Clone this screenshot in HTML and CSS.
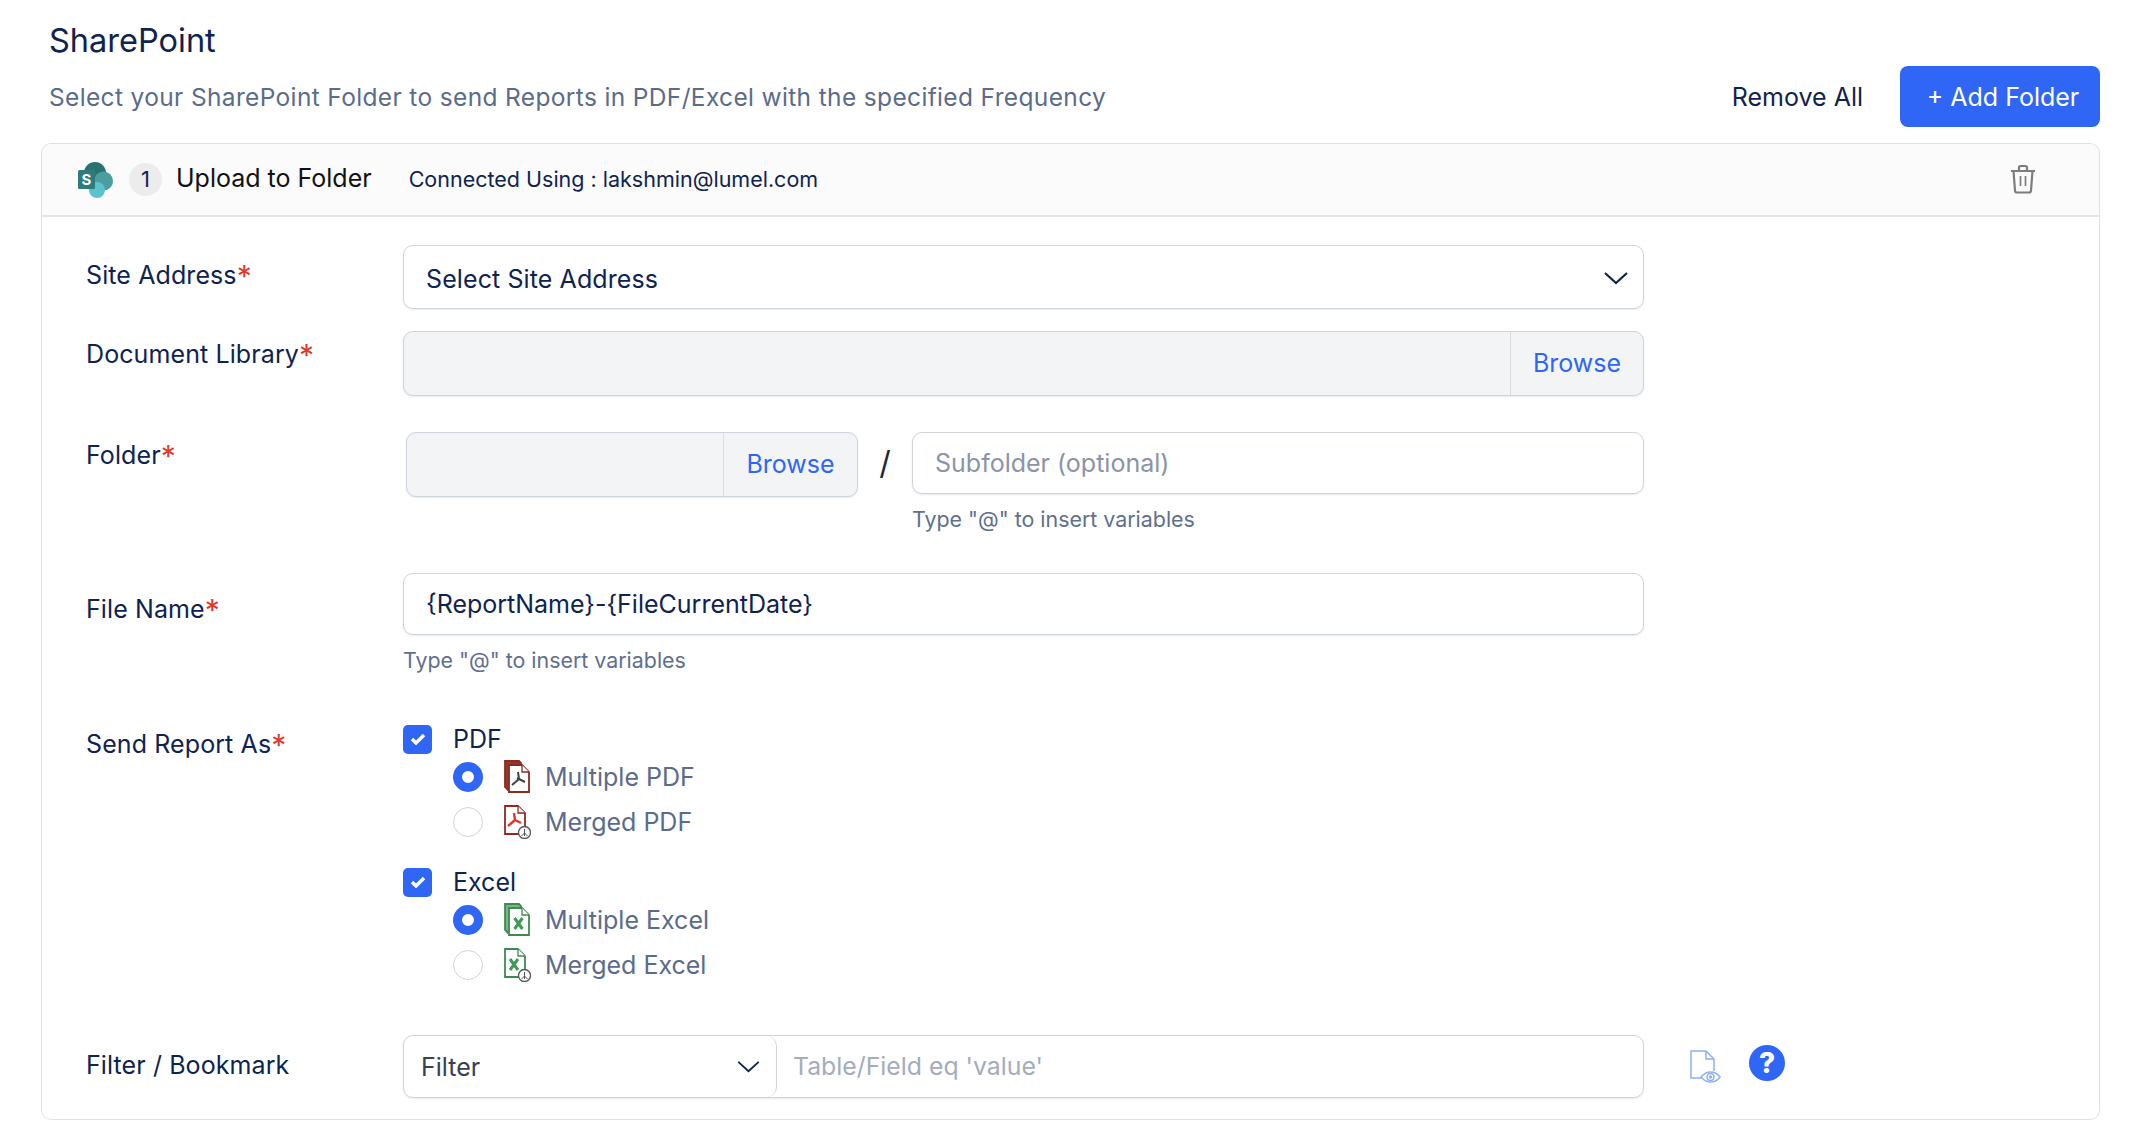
FILE: index.html
```html
<!DOCTYPE html>
<html lang="en">
<head>
  <meta charset="UTF-8">
  <title>SharePoint</title>
  <link rel="stylesheet" href="styles.css">
</head>
<body>

  <h1 class="page-title">SharePoint</h1>

  <div class="top-row">
    <p class="page-desc">Select your SharePoint Folder to send Reports in PDF/Excel with the specified Frequency</p>
    <div class="top-actions">
      <button class="btn-link">Remove All</button>
      <button class="btn-primary">+ Add Folder</button>
    </div>
  </div>

  <div class="card">
    <div class="card-head">
      <svg class="sp-logo" viewBox="0 0 36 36" width="36" height="36">
        <circle cx="17" cy="11" r="11" fill="#2a7270"/>
        <circle cx="25.500" cy="19" r="9.500" fill="#4a9ea0"/>
        <circle cx="19" cy="28" r="8" fill="#5cc3ce"/>
        <rect x="0" y="8" width="17" height="19" rx="1.500" fill="#2f7a7c"/>
        <text x="8.500" y="23" class="sp-letter" text-anchor="middle">S</text>
      </svg>
      <span class="badge">1</span>
      <span class="card-title">Upload to Folder</span>
      <span class="card-conn">Connected Using : lakshmin@lumel.com</span>
      <svg class="trash" viewBox="0 0 28 30" width="28" height="30" fill="none" stroke="#7d7d7d" stroke-width="2.200">
        <path d="M2 7h24M10 7V3.500a1.500 1.500 0 0 1 1.500-1.500h5a1.500 1.500 0 0 1 1.500 1.500V7"/>
        <path d="M4.500 7l1.500 19.500a2 2 0 0 0 2 2h12a2 2 0 0 0 2-2L23.500 7"/>
        <path d="M11.500 12v10M16.500 12v10" stroke-width="1.700"/>
      </svg>
    </div>

    <div class="card-body">
      <div class="row">
        <div class="label label-site">Site Address<span class="req">*</span></div>
        <div class="field select-box">
          <span class="select-text">Select Site Address</span>
          <svg class="chev" viewBox="0 0 24 14" width="24" height="14" fill="none" stroke="#0f2350" stroke-width="2.200"><path d="M1 2l11 10L23 2"/></svg>
        </div>
      </div>

      <div class="row row-lib">
        <div class="label label-lib">Document Library<span class="req">*</span></div>
        <div class="field browse-box">
          <div class="browse-empty"></div>
          <div class="browse-btn">Browse</div>
        </div>
      </div>

      <div class="row row-folder">
        <div class="label label-lib">Folder<span class="req">*</span></div>
        <div class="folder-wrap">
          <div class="browse-box folder-box">
            <div class="browse-empty"></div>
            <div class="browse-btn">Browse</div>
          </div>
          <div class="slash">/</div>
          <div class="sub-wrap">
            <div class="text-input placeholder">Subfolder (optional)</div>
            <div class="hint">Type "@" to insert variables</div>
          </div>
        </div>
      </div>

      <div class="row row-file">
        <div class="label label-file">File Name<span class="req">*</span></div>
        <div class="field-plain">
          <div class="text-input">{ReportName}-{FileCurrentDate}</div>
          <div class="hint">Type "@" to insert variables</div>
        </div>
      </div>

      <div class="row row-send">
        <div class="label label-send">Send Report As<span class="req">*</span></div>
        <div class="send-list">
          <div class="check-line">
            <span class="check">
              <svg viewBox="0 0 16 12" width="16" height="12" fill="none" stroke="#fff" stroke-width="3.400"><path d="M2 6l4 4 8-8"/></svg>
            </span>
            PDF
          </div>
          <div class="radio-line">
            <span class="radio on"></span>
            <svg class="file-icon" viewBox="0 0 27 34" width="27" height="34">
              <path d="M1 1h14l2 2v26l-13 1-3-3z" fill="#8e3a30" stroke="#8e2a20" stroke-width="1.800"/>
              <path d="M5 5h13l7 7v20H5z" fill="#fff" stroke="#8e2a20" stroke-width="1.800"/>
              <path d="M18 5v7h7" fill="#fff" stroke="#8e2a20" stroke-width="1.300"/>
              <path d="M14 12l1 7-7 6M15 19l6 3M15 19l-2-1" fill="none" stroke="#444" stroke-width="2"/>
            </svg>
            <span class="opt-text">Multiple PDF</span>
          </div>
          <div class="radio-line">
            <span class="radio"></span>
            <svg class="file-icon" viewBox="0 0 27 34" width="27" height="34">
              <path d="M1 1h13l7 7v21H1z" fill="#fff" stroke="#8e2a20" stroke-width="1.800"/>
              <path d="M14 1v7h7" fill="#fff" stroke="#8e2a20" stroke-width="1.300"/>
              <path d="M10 8l1 7-7 6M11 15l6 3" fill="none" stroke="#e0352b" stroke-width="2.400"/>
              <circle cx="20.500" cy="27.500" r="6" fill="#fff" stroke="#555" stroke-width="1.300"/>
              <path d="M20.500 24v7M17.500 31l3-3 3 3" fill="none" stroke="#555" stroke-width="1"/>
            </svg>
            <span class="opt-text">Merged PDF</span>
          </div>

          <div class="check-line check-excel">
            <span class="check">
              <svg viewBox="0 0 16 12" width="16" height="12" fill="none" stroke="#fff" stroke-width="3.400"><path d="M2 6l4 4 8-8"/></svg>
            </span>
            Excel
          </div>
          <div class="radio-line">
            <span class="radio on"></span>
            <svg class="file-icon" viewBox="0 0 27 34" width="27" height="34">
              <path d="M1 1h14l2 2v26l-13 1-3-3z" fill="#7bb487" stroke="#3f8a50" stroke-width="1.800"/>
              <path d="M5 5h13l7 7v20H5z" fill="#fff" stroke="#3f8a50" stroke-width="1.800"/>
              <path d="M18 5v7h7" fill="#fff" stroke="#3f8a50" stroke-width="1.300"/>
              <path d="M10.500 15l8 11M18.500 15l-8 11" fill="none" stroke="#3f9a55" stroke-width="3"/>
            </svg>
            <span class="opt-text">Multiple Excel</span>
          </div>
          <div class="radio-line">
            <span class="radio"></span>
            <svg class="file-icon" viewBox="0 0 27 34" width="27" height="34">
              <path d="M1 1h13l7 7v21H1z" fill="#fff" stroke="#3f8a50" stroke-width="1.800"/>
              <path d="M14 1v7h7" fill="#fff" stroke="#3f8a50" stroke-width="1.300"/>
              <path d="M6 11l8 11M14 11L6 22" fill="none" stroke="#3f9a55" stroke-width="3"/>
              <circle cx="20.500" cy="27.500" r="6" fill="#fff" stroke="#555" stroke-width="1.300"/>
              <path d="M20.500 24v7M17.500 31l3-3 3 3" fill="none" stroke="#555" stroke-width="1"/>
            </svg>
            <span class="opt-text">Merged Excel</span>
          </div>
        </div>
      </div>

      <div class="row row-filter">
        <div class="label label-filter">Filter / Bookmark</div>
        <div class="field filter-box">
          <div class="filter-select">
            <span>Filter</span>
            <svg viewBox="0 0 24 14" width="23" height="13" fill="none" stroke="#0f2350" stroke-width="2"><path d="M1 2l11 10L23 2"/></svg>
          </div>
          <div class="filter-input">Table/Field eq 'value'</div>
        </div>
        <svg class="doc-eye" viewBox="0 0 31 34" width="31" height="34" fill="none" stroke="#8fb0f5" stroke-width="1.500">
          <path d="M15 28H1V1h15l8 8v12M16 1v8h8"/>
          <path d="M11 27c3-3.500 6-5 9.500-5s7 1.500 9.500 5c-2.500 3.500-6 5-9.500 5s-6.500-1.500-9.500-5z" fill="#fff"/>
          <circle cx="20.500" cy="27" r="3.500"/>
          <circle cx="20.500" cy="27" r="1" fill="#8fb0f5"/>
        </svg>
        <span class="help">?</span>
      </div>
    </div>
  </div>

</body>
</html>
```

FILE: styles.css
```css
* {
  box-sizing: border-box;
}

body {
  margin: 0;
  padding: 0 36px 0 41px;
  background-color: #fff;
  font-family: Inter, "Noto Sans", sans-serif;
  color: #0f2350;
}

.page-title {
  margin: 0 0 0 8px;
  padding-top: 21px;
  height: 66px;
  font-size: 32.500px;
  line-height: 40px;
  font-weight: 400;
}

.top-row {
  display: flex;
  align-items: center;
  justify-content: space-between;
  height: 77px;
  padding-bottom: 16px;
}

.page-desc {
  margin: 0 0 0 8px;
  font-size: 24.500px;
  line-height: 30px;
  letter-spacing: 0.35px;
  color: #5b6b8c;
}

.top-actions {
  display: flex;
  align-items: center;
  gap: 37px;
}

.btn-link {
  border: none;
  background: none;
  padding: 0;
  font-family: inherit;
  font-size: 25px;
  color: #0f2350;
}

.btn-primary {
  width: 200px;
  height: 61px;
  border: none;
  border-radius: 8px;
  background-color: #2f66f6;
  color: #fff;
  font-family: inherit;
  font-size: 25px;
  padding: 0 0 0 6px;
}

.card {
  border: 1px solid #dde0e7;
  border-radius: 10px;
  height: 977px;
}

.card-head {
  display: flex;
  align-items: center;
  height: 73px;
  padding: 0 62px 0 36px;
  background-color: #fbfbfb;
  border-bottom: 2px solid #e2e4ea;
  border-radius: 10px 10px 0 0;
}

.sp-logo {
  flex: none;
}

.sp-letter {
  font-size: 15px;
  font-weight: 700;
  fill: #fff;
}

.badge {
  width: 33px;
  height: 33px;
  margin-left: 15px;
  border-radius: 50%;
  background-color: #ececec;
  font-size: 22px;
  line-height: 33px;
  text-align: center;
}

.card-title {
  margin-left: 14px;
  padding-bottom: 3px;
  font-size: 25px;
  color: #111;
}

.card-conn {
  margin-left: 37px;
  padding-bottom: 2px;
  font-size: 21.500px;
  color: #0f2350;
}

.trash {
  margin-left: auto;
  margin-bottom: 2px;
}

.card-body {
  padding: 28px 0 0 44px;
}

.row {
  display: flex;
  align-items: flex-start;
}

.label {
  flex: none;
  width: 317px;
  font-size: 25px;
  line-height: 30px;
  letter-spacing: 0.1px;
  color: #0f2350;
}

.label-site { padding-top: 15px; }
.label-lib { padding-top: 8px; }
.label-file { padding-top: 21px; }
.label-send { padding-top: 5px; }
.label-filter { padding-top: 15px; }

.req {
  font-size: 30px;
  line-height: 0;
  vertical-align: -3px;
  color: #dd3a2e;
}

.field,
.field-plain,
.folder-wrap {
  width: 1241px;
}

.select-box {
  display: flex;
  align-items: center;
  justify-content: space-between;
  height: 64px;
  padding: 0 15px 0 22px;
  border: 1px solid #cfd3dd;
  border-radius: 10px;
  box-shadow: 0 1px 2px rgba(15, 35, 80, 0.1);
  font-size: 25px;
  letter-spacing: 0.1px;
}

.select-text {
  padding-top: 3px;
}

.chev {
  margin-top: 2px;
}

.row-lib {
  margin-top: 22px;
}

.browse-box {
  display: flex;
  height: 65px;
  border: 1px solid #cfd3dd;
  border-radius: 10px;
  background-color: #f3f4f6;
  box-shadow: 0 1px 2px rgba(15, 35, 80, 0.1);
}

.browse-empty {
  flex: 1;
}

.browse-btn {
  width: 133px;
  border-left: 1px solid #d9dce3;
  font-size: 25px;
  line-height: 63px;
  text-align: center;
  color: #2f66f6;
}

.row-folder {
  margin-top: 36px;
}

.folder-wrap {
  display: flex;
  align-items: flex-start;
  padding-left: 3px;
}

.folder-box {
  width: 452px;
  flex: none;
}

.folder-box .browse-btn {
  width: 134px;
}

.slash {
  width: 54px;
  flex: none;
  font-size: 32px;
  line-height: 62px;
  text-align: center;
  color: #1f2937;
}

.sub-wrap {
  flex: 1;
}

.text-input {
  height: 62px;
  padding: 0 22px;
  border: 1px solid #cfd3dd;
  border-radius: 10px;
  box-shadow: 0 1px 2px rgba(15, 35, 80, 0.1);
  font-size: 25px;
  line-height: 60px;
}

.placeholder {
  color: #8a94a6;
}

.hint {
  margin-top: 10px;
  font-size: 21.400px;
  line-height: 30px;
  color: #5f6f8e;
}

.row-file {
  margin-top: 39px;
}

.row-send {
  margin-top: 49px;
}

.check-line {
  display: flex;
  align-items: center;
  height: 30px;
  font-size: 25px;
  color: #0f2350;
}

.check-excel {
  margin-top: 23px;
}

.check {
  display: flex;
  align-items: center;
  justify-content: center;
  width: 29px;
  height: 29px;
  margin-right: 21px;
  border-radius: 5px;
  background-color: #2f66f6;
}

.radio-line {
  display: flex;
  align-items: center;
  height: 45px;
  margin-left: 50px;
  font-size: 25px;
  color: #5b6b8c;
}

.radio {
  flex: none;
  width: 30px;
  height: 30px;
  border: 1px solid #cfd3dd;
  border-radius: 50%;
}

.radio.on {
  border: 9px solid #2f66f6;
}

.file-icon {
  flex: none;
  margin-left: 21px;
}

.opt-text {
  margin-left: 14px;
}

.row-filter {
  margin-top: 48px;
}

.filter-box {
  display: flex;
  height: 63px;
  border: 1px solid #cfd3dd;
  border-radius: 10px;
  box-shadow: 0 1px 2px rgba(15, 35, 80, 0.1);
  font-size: 25px;
}

.filter-select {
  display: flex;
  align-items: center;
  justify-content: space-between;
  width: 373px;
  padding: 0 16px 0 17px;
  border-right: 1px solid #cfd3dd;
  border-radius: 10px;
  color: #374151;
}

.filter-input {
  padding-left: 16px;
  font-size: 24.800px;
  line-height: 61px;
  color: #a3adbd;
}

.doc-eye {
  margin: 15px 0 0 46px;
}

.help {
  width: 36px;
  height: 36px;
  margin: 10px 0 0 28px;
  border-radius: 50%;
  background-color: #2f66f6;
  color: #fff;
  font-size: 28px;
  font-weight: 800;
  line-height: 36px;
  text-align: center;
}
```
